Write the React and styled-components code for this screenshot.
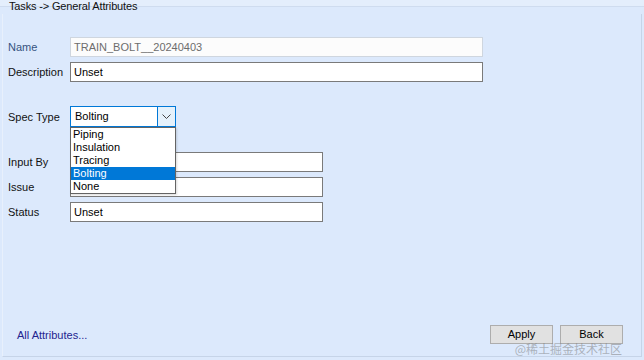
import React from "react";
import styled, { createGlobalStyle } from "styled-components";

const Global = createGlobalStyle`
  html, body { margin: 0; padding: 0; background: #dce9fc; }
  body { font-family: "Liberation Sans", Arial, sans-serif; font-size: 11px; color: #000; }
`;

const Window = styled.div`
  position: relative;
  width: 644px;
  height: 360px;
  background: #dce9fc;
  display: flex;
  flex-direction: column;
  overflow: hidden;
`;

const Header = styled.div`
  height: 14px;
  padding-left: 9px;
  line-height: 13px;
  font-size: 11px;
  letter-spacing: -0.15px;
  color: #111;
  background: linear-gradient(#e4eefc 0 6px, #cfdcef 6px 7px, #dce9fc 7px);
`;

const Panel = styled.div`
  flex: 1;
  margin: 0 2px 3px 2px;
  border-left: 1px solid #e8f0fc;
  border-right: 1px solid #c6d4e8;
  border-bottom: 1px solid #c6d4e8;
  display: flex;
  flex-direction: column;
  padding: 23px 0 0 5px;
`;

const Form = styled.div`
  display: flex;
  flex-direction: column;
  position: relative;
`;

const Row = styled.div`
  display: flex;
  align-items: center;
  margin-top: ${(p) => p.$gap || 0}px;
`;

const Label = styled.div`
  width: 62px;
  flex: none;
  color: ${(p) => (p.$dim ? "#35537f" : "#111")};
`;

const TextBox = styled.div`
  box-sizing: border-box;
  width: ${(p) => p.$w}px;
  height: 20px;
  line-height: 18px;
  padding-left: 3px;
  background: ${(p) => (p.$disabled ? "#fcfcfc" : "#fff")};
  border: 1px solid ${(p) => (p.$disabled ? "#cfd6df" : "#7a7a7a")};
  color: ${(p) => (p.$disabled ? "#6d6d6d" : "#000")};
  white-space: nowrap;
`;

const Combo = styled.div`
  position: relative;
  box-sizing: border-box;
  width: 106px;
  height: 21px;
  display: flex;
  background: #fff;
  border: 1px solid #0078d7;
`;

const ComboText = styled.div`
  flex: 1;
  line-height: 19px;
  padding-left: 4px;
`;

const ComboButton = styled.div`
  width: 17px;
  border-left: 1px solid #0078d7;
  background: #e5f1fb;
  display: flex;
  align-items: center;
  justify-content: center;
`;

const DropList = styled.div`
  position: absolute;
  left: -1px;
  top: 20px;
  box-sizing: border-box;
  width: 106px;
  background: #fff;
  border: 1px solid #646464;
  z-index: 2;
  box-shadow: 1px 1px 2px rgba(0, 0, 0, 0.15);
`;

const Item = styled.div`
  height: 13px;
  line-height: 13px;
  padding-left: 2px;
  background: ${(p) => (p.$selected ? "#0078d7" : "transparent")};
  color: ${(p) => (p.$selected ? "#fff" : "#000")};
`;

const Footer = styled.div`
  margin-top: auto;
  display: flex;
  align-items: center;
  padding: 0 18px 12px 9px;
`;

const Link = styled.div`
  color: #24248f;
  flex: 1;
  margin-top: 0px;
`;

const Buttons = styled.div`
  display: flex;
  gap: 7px;
`;

const Button = styled.div`
  box-sizing: border-box;
  width: 63px;
  height: 19px;
  line-height: 17px;
  text-align: center;
  background: #e1e1e1;
  border: 1px solid #adadad;
  color: #000;
`;

const Watermark = styled.div`
  position: absolute;
  right: 22px;
  bottom: 4px;
  font-family: "Noto Sans CJK SC", sans-serif;
  font-size: 12px;
  line-height: 15px;
  color: rgba(120, 120, 120, 0.5);
`;

const items = ["Piping", "Insulation", "Tracing", "Bolting", "None"];

export default function App() {
  return (
    <>
      <Global />
      <Window>
        <Header>Tasks -&gt; General Attributes</Header>
        <Panel>
          <Form>
            <Row>
              <Label $dim>Name</Label>
              <TextBox $w={413} $disabled>TRAIN_BOLT__20240403</TextBox>
            </Row>
            <Row $gap={5}>
              <Label>Description</Label>
              <TextBox $w={413}>Unset</TextBox>
            </Row>
            <Row $gap={24}>
              <Label>Spec Type</Label>
              <Combo>
                <ComboText>Bolting</ComboText>
                <ComboButton>
                  <svg width="9" height="5" viewBox="0 0 9 5">
                    <path d="M0.5 0.5 L4.5 4.5 L8.5 0.5" fill="none" stroke="#444" strokeWidth="1" />
                  </svg>
                </ComboButton>
                <DropList>
                  {items.map((it) => (
                    <Item key={it} $selected={it === "Bolting"}>{it}</Item>
                  ))}
                </DropList>
              </Combo>
            </Row>
            <Row $gap={25}>
              <Label>Input By</Label>
              <TextBox $w={253}></TextBox>
            </Row>
            <Row $gap={5}>
              <Label>Issue</Label>
              <TextBox $w={253}></TextBox>
            </Row>
            <Row $gap={5}>
              <Label>Status</Label>
              <TextBox $w={253}>Unset</TextBox>
            </Row>
          </Form>
          <Footer>
            <Link>All Attributes...</Link>
            <Buttons>
              <Button>Apply</Button>
              <Button>Back</Button>
            </Buttons>
          </Footer>
        </Panel>
        <Watermark>@稀土掘金技术社区</Watermark>
      </Window>
    </>
  );
}
